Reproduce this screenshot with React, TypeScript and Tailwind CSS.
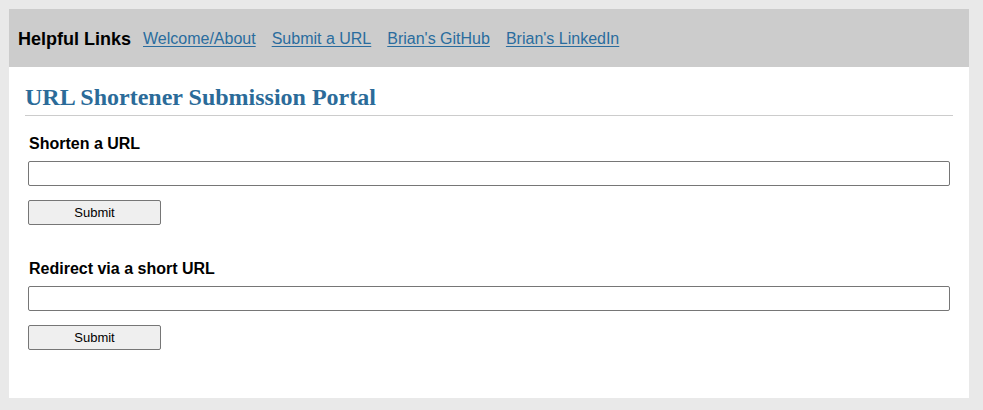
import React from 'react'

const links = ['Welcome/About', 'Submit a URL', "Brian's GitHub", "Brian's LinkedIn"]

function UrlForm({ label }: { label: string }) {
  return (
    <div className="mb-[35px]">
      <label className="block text-[16px] font-bold text-black leading-[18px] mb-[8px]">{label}</label>
      <input
        type="text"
        className="block w-[922px] h-[25px] ml-[-1px] border border-[#767676] rounded-[2px] bg-white px-1 text-[13px]"
      />
      <button
        type="button"
        className="block mt-[14px] ml-[-1px] w-[133px] h-[25px] bg-[#efefef] border border-[#767676] rounded-[2px] text-[13px] text-black leading-none"
      >
        Submit
      </button>
    </div>
  )
}

export default function App() {
  return (
    <div className="h-[410px] bg-[#e9e9e9] pt-[9px] pl-[9px] font-['Liberation_Sans',Arial,sans-serif]">
      <div className="w-[960px] h-[389px] bg-white">
        <nav className="h-[58px] bg-[#cccccc] flex items-center pl-[9px] pt-[2px]">
          <span className="text-[18px] font-bold text-black mr-[12px]">Helpful Links</span>
          <div className="flex gap-[16px] text-[16px]">
            {links.map((l) => (
              <a key={l} href="#" className="text-[#2a6c9e] underline underline-offset-2">
                {l}
              </a>
            ))}
          </div>
        </nav>
        <main className="px-[16px] pt-[15px]">
          <h1 className="font-['Liberation_Serif','Times_New_Roman',serif] font-bold text-[24px] leading-[30px] text-[#2b6b99] border-b border-[#cccccc] pb-[3px] mb-[19px]">
            URL Shortener Submission Portal
          </h1>
          <div className="pl-[4px]">
            <UrlForm label="Shorten a URL" />
            <UrlForm label="Redirect via a short URL" />
          </div>
        </main>
      </div>
    </div>
  )
}
